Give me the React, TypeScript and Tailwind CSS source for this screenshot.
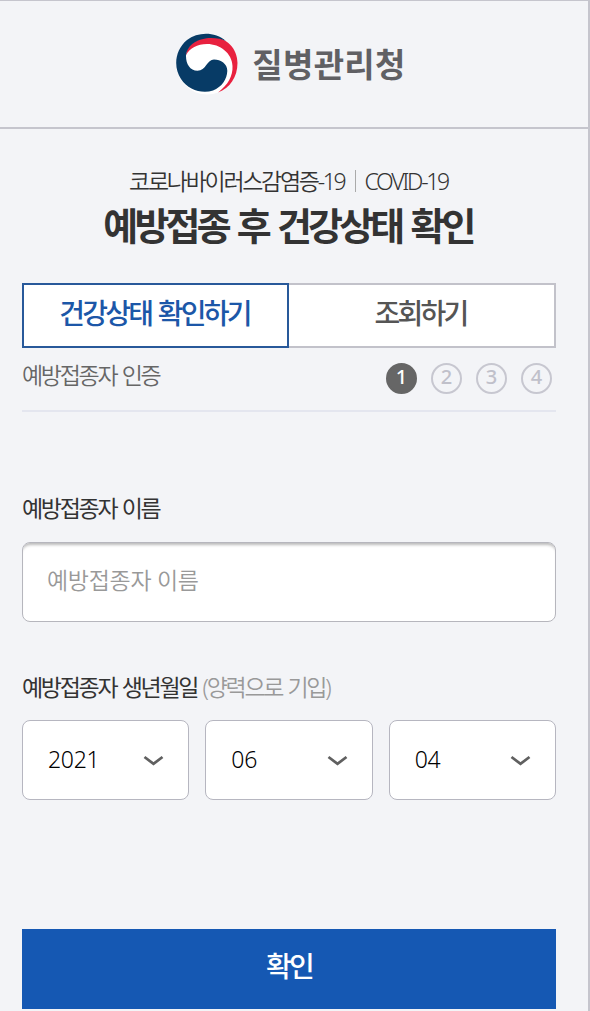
import { useState } from "react";

const steps = [1, 2, 3, 4];

function GovLogo() {
  return (
    <svg className="w-[62px] h-[62px] shrink-0" viewBox="0 0 62 62">
      <circle cx="31" cy="31" r="30.5" fill="#fff" />
      <path
        d="M10 22 C11 10 24 4 35 4 C51 4 61.500 16 61.500 30 C61.500 44 54 55 42 59.500 C52 52 57 43 56.500 33 C56 20 44 11 31 11 C21 11 14 15 10 22 Z"
        fill="#e8213f"
      />
      <path
        d="M50 8 C39 -1.500 22 -1.500 11 7 C-1 17 -3 34 5 46 C12 57 26 61 37 57.500 C46 54 51 46 51.300 38 C51.500 31 45 26.500 38 26.500 C31 26.500 30 37.700 21.500 37.700 C14 37.700 10 31 10 23 C11 11 23 5 35 5 C41 5 46 6 50 8 Z"
        fill="#073b66"
      />
    </svg>
  );
}

function DateSelect({ value }: { value: string }) {
  return (
    <button className="flex h-20 items-center justify-between rounded-lg border border-[#b6b6c0] bg-white pl-[25px] pr-[24px] text-black">
      <span className="pb-[2px] text-[23px] leading-none font-light tracking-[-0.3px]">{value}</span>
      <svg className="mt-px h-3 w-[21px]" viewBox="0 0 21 12" fill="none">
        <path d="M1.500 2 L10.500 8.800 L19.500 2" stroke="#606060" strokeWidth="2.800" />
      </svg>
    </button>
  );
}

export default function App() {
  const [tab, setTab] = useState(0);
  const [name, setName] = useState("");

  return (
    <div className="h-[1011px] w-[590px] overflow-hidden border-t border-r-2 border-[#c5c5cd] bg-[#f3f4f7] font-['Noto_Sans','Noto_Sans_CJK_KR',sans-serif] text-[#333]">
      <header className="flex h-32 items-center justify-center gap-[14px] border-b-2 border-[#c5c5cd] pr-[6px]">
        <GovLogo />
        <span className="text-[33px] leading-none font-bold tracking-[0.3px] text-[#606064]">질병관리청</span>
      </header>

      <main className="pr-8 pl-[22px]">
        <div className="pt-[38px] text-center">
          <p className="flex h-7 items-center justify-center pr-[1px] text-[23px] leading-7 font-[350] tracking-[-0.1em]">
            <span>코로나바이러스감염증-19</span>
            <span className="mr-[8px] ml-[11px] h-[22px] w-px bg-[#aaa]" />
            <span>COVID-19</span>
          </p>
          <h1 className="mt-[2px] pr-[2px] text-[38px] leading-[56px] font-bold tracking-[-0.1em] [word-spacing:0.075em]">
            예방접종 후 건강상태 확인
          </h1>
        </div>

        <div className="mt-[30px] grid h-[65px] grid-cols-2">
          {["건강상태 확인하기", "조회하기"].map((label, i) => (
            <button
              key={label}
              onClick={() => setTab(i)}
              className={
                "border-2 bg-white pr-[2px] pb-[6px] text-[28px] leading-none font-medium tracking-[-0.1em] [word-spacing:0.075em] " +
                (tab === i ? "border-[#28599a] text-[#1c57a8]" : "border-[#c2c2ca] border-l-0 text-[#555]")
              }
            >
              {label}
            </button>
          ))}
        </div>

        <div className="flex h-16 items-center justify-between border-b-2 border-[#e4e6ef] pr-[4px]">
          <span className="pb-[8px] text-[23px] leading-none font-[350] tracking-[-0.1em] text-[#666] [word-spacing:0.075em]">
            예방접종자 인증
          </span>
          <div className="flex gap-[14px] pb-px">
            {steps.map((n) => (
              <span
                key={n}
                className={
                  "flex h-[31px] w-[31px] items-center justify-center rounded-full border-2 pb-[4px] text-xl leading-none font-medium " +
                  (n === 1 ? "border-[#666] bg-[#666] text-white" : "border-[#c7c7d0] text-[#c0c0ca]")
                }
              >
                {n}
              </span>
            ))}
          </div>
        </div>

        <label
          className="mt-[79px] block text-[23px] leading-[34px] tracking-[-0.1em] [word-spacing:0.075em]"
          htmlFor="name"
        >
          예방접종자 이름
        </label>
        <input
          id="name"
          value={name}
          onChange={(e) => setName(e.target.value)}
          placeholder="예방접종자 이름"
          className="mt-[17px] block h-20 w-full rounded-lg border border-[#b6b6bd] bg-white px-[24px] pb-[5px] text-[23px] font-[350] tracking-[-0.3px] shadow-[inset_0_4px_3px_-2px_#bbbbbb] placeholder:text-[#999]"
        />

        <p className="mt-[48px] text-[23px] leading-[34px] tracking-[-0.1em] [word-spacing:0.075em]">
          예방접종자 생년월일 <span className="font-[350] text-[#999]">(양력으로 기입)</span>
        </p>
        <div className="mt-4 grid grid-cols-3 gap-4">
          <DateSelect value="2021" />
          <DateSelect value="06" />
          <DateSelect value="04" />
        </div>

        <button className="mt-[129px] block h-20 w-full bg-[#1558b3] pb-[6px] text-[28px] leading-none font-medium tracking-[-0.1em] text-white">
          확인
        </button>
      </main>
    </div>
  );
}
